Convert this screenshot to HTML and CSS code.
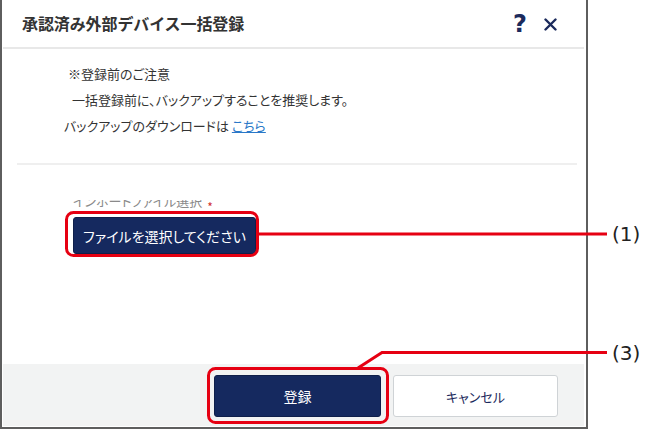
FILE: index.html
```html
<!DOCTYPE html>
<html lang="ja">
<head>
<meta charset="utf-8">
<link rel="stylesheet" href="styles.css">
</head>
<body>
<div class="page">
  <div class="frame">
    <div class="dialog">
      <div class="header">
        <div class="title">承認済み外部デバイス一括登録</div>
        <div class="tools">
          <span class="help">?</span>
          <svg class="close" width="13" height="13" viewBox="0 0 13 13"><path d="M1.5 1.5 L11.5 11.5 M11.5 1.5 L1.5 11.5" stroke="#1b2a5c" stroke-width="2.4" stroke-linecap="round"/></svg>
        </div>
      </div>
      <div class="content">
        <div class="notes">
          <p class="note n1">※登録前のご注意</p>
          <p class="note n2">一括登録前に、バックアップすることを推奨します。</p>
          <p class="note n3">バックアップのダウンロードは <a class="link">こちら</a></p>
        </div>
        <div class="divider"></div>
        <div class="field">
          <div class="label-clip"><div class="label">インポートファイル選択 <span class="req">*</span></div></div>
          <button class="btn primary file">ファイルを選択してください</button>
        </div>
      </div>
      <div class="footer">
        <button class="btn primary submit">登録</button>
        <button class="btn secondary cancel">キャンセル</button>
      </div>
    </div>
  </div>
  <svg class="callouts" width="645" height="430" viewBox="0 0 645 430">
    <rect x="66.5" y="212.5" width="191" height="43" rx="7" fill="none" stroke="#e60012" stroke-width="3"/>
    <line x1="258" y1="234" x2="607" y2="234" stroke="#e60012" stroke-width="3"/>
    <rect x="208.5" y="368.5" width="179" height="54" rx="7" fill="none" stroke="#e60012" stroke-width="3"/>
    <polyline points="358,368 382,352.5 607,352.5" fill="none" stroke="#e60012" stroke-width="3"/>
    <text x="612" y="241" class="ann">(1)</text>
    <text x="612" y="360" class="ann">(3)</text>
  </svg>
</div>
</body>
</html>
```
FILE: styles.css
```css
html, body {
  margin: 0;
  padding: 0;
  background: #ffffff;
}
body {
  font-family: "Noto Sans CJK JP", "Noto Sans", sans-serif;
  color: #333333;
}
.page {
  position: relative;
  width: 645px;
  height: 430px;
  overflow: hidden;
}
.frame {
  width: 584px;
  height: 427px;
  border-left: 2px solid #5e5e5e;
  border-right: 2px solid #5e5e5e;
  border-bottom: 2px solid #5e5e5e;
  background: #ffffff;
  box-sizing: content-box;
}
.dialog {
  display: flex;
  flex-direction: column;
  height: 426px;
  margin: 0 2px 0 1px;
}
.header {
  border-bottom: 2px solid #e8e8e8;
  display: flex;
  align-items: center;
  justify-content: space-between;
  padding: 0 27px 0 19px;
  box-sizing: border-box;
  height: 49px;
}
.title {
  font-size: 16px;
  font-weight: 700;
  color: #333333;
  letter-spacing: -0.1px;
  padding-bottom: 2px;
}
.tools {
  display: flex;
  align-items: center;
  gap: 17px;
}
.help {
  font-family: "DejaVu Sans", sans-serif;
  font-weight: 700;
  font-size: 24px;
  color: #1b2a5c;
  line-height: 1;
}
.close {
  display: block;
  margin-top: 2px;
}
.content {
  flex: 1;
  display: flex;
  flex-direction: column;
}
.notes {
  padding: 12px 0 0 0;
  height: 102px;
}
.note {
  margin: 0;
  font-size: 13px;
  line-height: 26px;
  font-feature-settings: "palt" 1;
  color: #333333;
}
.n1 { padding-left: 65px; }
.n2 { padding-left: 69px; }
.n3 { padding-left: 61px; }
.link {
  color: #2a78c8;
  text-decoration: underline;
}
.divider {
  height: 2px;
  background: #efefef;
  margin: 0 7px 0 14px;
}
.field {
  padding: 35px 0 0 70px;
  display: flex;
  flex-direction: column;
  align-items: flex-start;
}
.label-clip {
  height: 9px;
  overflow: hidden;
  margin-bottom: 8px;
}
.label {
  font-size: 13px;
  line-height: 18px;
  color: #8a8a8a;
  margin-top: -8px;
  font-feature-settings: "palt" 1;
}
.req {
  color: #d0312d;
  font-size: 12px;
  position: relative;
  top: 6px;
  margin-left: 2px;
}
.btn {
  font-family: "Noto Sans CJK JP", "Noto Sans", sans-serif;
  font-size: 13px;
  border-radius: 3px;
  cursor: pointer;
  padding: 0;
  font-feature-settings: "palt" 1;
}
.primary {
  background: #15295f;
  color: #ffffff;
  border: 1px solid #0f1f4a;
}
.file {
  width: 183px;
  height: 37px;
  font-size: 14px;
}
.footer {
  height: 62px;
  background: #f2f3f3;
  display: flex;
  justify-content: flex-end;
  align-items: flex-start;
  gap: 12px;
  padding: 11px 26px 0 0;
  box-sizing: border-box;
}
.submit {
  width: 167px;
  height: 42px;
  font-size: 14px;
}
.secondary {
  background: #ffffff;
  color: #1b2a5c;
  border: 1px solid #cfd3d6;
}
.cancel {
  width: 165px;
  height: 42px;
  font-size: 13px;
}
.callouts {
  position: absolute;
  left: 0;
  top: 0;
  pointer-events: none;
}
.ann {
  font-family: "DejaVu Sans", sans-serif;
  font-size: 20px;
  fill: #222222;
}
```
